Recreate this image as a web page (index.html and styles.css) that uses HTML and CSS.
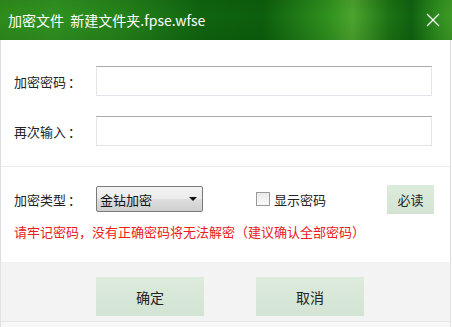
FILE: index.html
```html
<!DOCTYPE html>
<html lang="zh-CN">
<head>
    <meta charset="UTF-8">
    <title>加密文件</title>
    <link rel="stylesheet" href="styles.css">
</head>
<body>
    <div class="dialog">
        <!-- Title bar -->
        <header class="titlebar">
            <span class="title">加密文件&nbsp;&nbsp;新建文件夹.fpse.wfse</span>
            <span class="close">
                <svg width="14" height="14" viewBox="0 0 14 14">
                    <path d="M1 1 L13 13 M13 1 L1 13" stroke="#fff" stroke-width="1.2" fill="none"/>
                </svg>
            </span>
        </header>

        <!-- Password fields -->
        <section class="fields">
            <div class="row">
                <label class="label">加密密码<span class="colon">：</span></label>
                <input type="password" class="textbox">
            </div>
            <div class="row">
                <label class="label">再次输入<span class="colon">：</span></label>
                <input type="password" class="textbox">
            </div>
        </section>

        <!-- Options -->
        <section class="options">
            <div class="row">
                <span class="label">加密类型<span class="colon">：</span></span>
                <div class="select">
                    <span>金钻加密</span>
                    <span class="arrow"></span>
                </div>
                <label class="check">
                    <span class="box"></span>
                    显示密码
                </label>
                <button class="btn btn-read">必读</button>
            </div>
            <p class="warning">请牢记密码<span class="cjk-tc">，</span>没有正确密码将无法解密<span class="cjk-tc">（</span>建议确认全部密码<span class="cjk-tc">）</span></p>
        </section>

        <!-- Footer -->
        <footer class="actions">
            <button class="btn btn-action">确定</button>
            <button class="btn btn-action">取消</button>
        </footer>
    </div>
</body>
</html>
```

FILE: styles.css
```css
/* General */
body {
    margin: 0;
    padding: 0;
    background-color: #fff;
    font-family: "Microsoft YaHei", "Noto Sans CJK SC", sans-serif;
    font-size: 13px;
    color: #222;
    text-spacing-trim: space-all;
}

.dialog {
    width: 452px;
    height: 327px;
    display: flex;
    flex-direction: column;
    overflow: hidden;
}

/* Title bar */
.titlebar {
    height: 40px;
    flex-shrink: 0;
    display: flex;
    align-items: center;
    justify-content: space-between;
    padding: 0 12px 0 8px;
    color: #fff;
    background:
        linear-gradient(180deg, rgba(0, 0, 0, 0.06) 0%, rgba(0, 0, 0, 0) 40%, rgba(0, 0, 0, 0.08) 100%),
        linear-gradient(90deg, #2e8c1c 0%, #309220 12%, #238019 28%, #0f640f 45%, #0c5e0c 58%, #2e901d 72%, #4ca52e 78%, #1d7314 86%, #106210 91%, #2f8f1f 97%, #3e9a25 100%);
}

.title {
    font-size: 14px;
}

.close {
    display: flex;
    align-items: center;
}

/* centred full-width punctuation */
.colon,
.cjk-tc {
    font-family: "Noto Sans CJK TC", sans-serif;
}

.colon {
    margin-left: 2px;
}

/* Form sections */
.fields,
.options {
    border-left: 1px solid #dcdcdc;
    border-right: 1px solid #dcdcdc;
    margin-right: 1px;
}

.fields {
    padding: 26px 0 20px 13px;
    display: flex;
    flex-direction: column;
    gap: 20px;
    border-bottom: 1px solid #ececec;
}

.row {
    display: flex;
    align-items: center;
}

.label {
    width: 82px;
    flex-shrink: 0;
}

.textbox {
    width: 336px;
    height: 30px;
    box-sizing: border-box;
    margin: 0;
    border: 1px solid #e2e6ea;
    border-top-color: #a9a9a9;
    background-color: #fff;
    outline: none;
}

.options {
    padding: 17px 0 0 13px;
    height: 78px;
}

.select {
    width: 107px;
    height: 26px;
    box-sizing: border-box;
    border: 1px solid #7a7a7a;
    border-radius: 2px;
    background: linear-gradient(180deg, #f3f3f3 0%, #ebebeb 50%, #dddddd 51%, #cfcfcf 100%);
    display: flex;
    align-items: center;
    justify-content: space-between;
    padding: 0 5px 0 3px;
    color: #111;
}

.arrow {
    width: 0;
    height: 0;
    border-left: 4px solid transparent;
    border-right: 4px solid transparent;
    border-top: 4px solid #111;
}

.check {
    margin-left: 53px;
    display: flex;
    align-items: center;
    gap: 4px;
    width: 131px;
}

.box {
    width: 12px;
    height: 12px;
    border: 1px solid #9a9a9a;
    background: linear-gradient(180deg, #eaeaea, #fafafa);
}

.btn {
    font-family: inherit;
    font-size: 13px;
    color: #222;
    border: none;
    padding: 0;
    background: linear-gradient(180deg, #dcebdc 0%, #d4e4d4 100%);
}

.btn-read {
    width: 47px;
    height: 29px;
    margin-top: 1px;
}

.warning {
    margin: 8px 0 0;
    color: #e8201a;
}

/* Footer */
.actions {
    flex: 1;
    background-color: #f3f3f3;
    border-left: 1px solid #e2e2e2;
    border-right: 1px solid #e2e2e2;
    margin-right: 1px;
    display: flex;
    align-items: flex-start;
    padding: 15px 0 0 95px;
    gap: 52px;
    box-shadow: inset 0 -5px 0 #f7f7f7, inset 0 -6px 0 #e6e6e6;
}

.btn-action {
    width: 108px;
    height: 39px;
    font-size: 14px;
}
```
